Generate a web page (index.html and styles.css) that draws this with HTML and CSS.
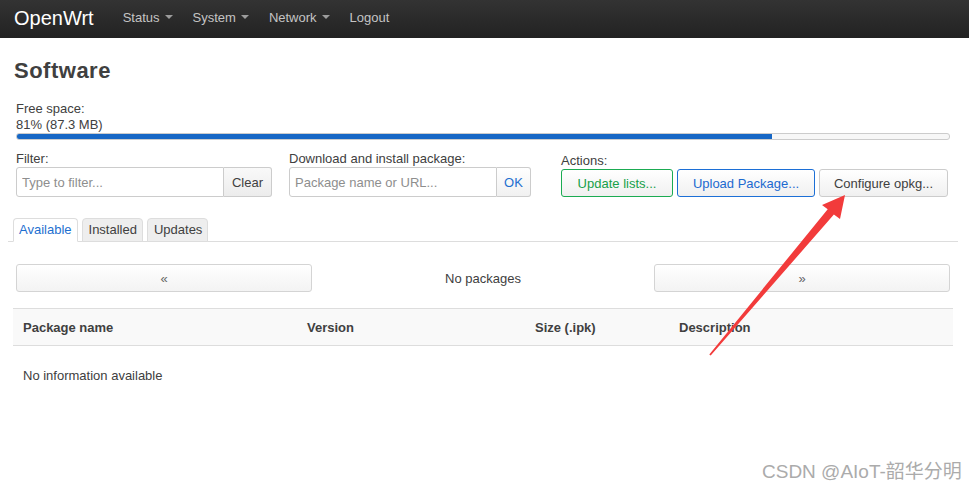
FILE: index.html
```html
<!DOCTYPE html>
<html lang="en">
<head>
<meta charset="utf-8">
<title>Software - OpenWrt</title>
<link rel="stylesheet" href="styles.css">
</head>
<body>
<header class="navbar">
  <a class="brand">OpenWrt</a>
  <ul class="nav">
    <li><a>Status<span class="caret"></span></a></li>
    <li><a>System<span class="caret"></span></a></li>
    <li><a>Network<span class="caret"></span></a></li>
    <li><a>Logout</a></li>
  </ul>
</header>
<main class="main">
  <h2 class="title">Software</h2>
  <div class="section">
    <div class="label free-first">Free space:</div>
    <div class="label">81% (87.3 MB)</div>
    <div class="progress"><div class="progress-bar" style="width:81%"></div></div>
    <div class="controls">
      <div class="ctrl">
        <label class="label">Filter:</label>
        <div class="group">
          <input class="input" type="text" placeholder="Type to filter...">
          <button class="addon">Clear</button>
        </div>
      </div>
      <div class="ctrl">
        <label class="label">Download and install package:</label>
        <div class="group">
          <input class="input" type="text" placeholder="Package name or URL...">
          <button class="addon addon-ok">OK</button>
        </div>
      </div>
      <div class="ctrl ctrl-actions">
        <label class="label">Actions:</label>
        <div class="actions">
          <button class="btn btn-green">Update lists...</button>
          <button class="btn btn-blue">Upload Package...</button>
          <button class="btn btn-plain">Configure opkg...</button>
        </div>
      </div>
    </div>
  </div>
  <ul class="tabs">
    <li><a class="tab active">Available</a></li>
    <li><a class="tab">Installed</a></li>
    <li><a class="tab">Updates</a></li>
  </ul>
  <div class="pager">
    <button class="pbtn">&laquo;</button>
    <div class="pinfo">No packages</div>
    <button class="pbtn">&raquo;</button>
  </div>
  <div class="table">
    <div class="thead">
      <div class="th">Package name</div>
      <div class="th">Version</div>
      <div class="th">Size (.ipk)</div>
      <div class="th">Description</div>
    </div>
    <div class="placeholder">No information available</div>
  </div>
</main>
<div class="watermark">CSDN @AIoT-韶华分明</div>
<svg class="arrow" width="969" height="490" viewBox="0 0 969 490" xmlns="http://www.w3.org/2000/svg">
  <polygon points="845,195 840,219 833.9,214.5 710.7,355.5 709.3,354.5 827.7,209.3 822,205" fill="#f23b3b"/>
</svg>
</body>
</html>
```

FILE: styles.css
```css
* { box-sizing: border-box; }
html, body { margin: 0; padding: 0; }
body {
  font-family: "Liberation Sans", Arial, sans-serif;
  font-size: 13px;
  color: #404040;
  background: #fff;
  width: 969px;
  height: 490px;
  overflow: hidden;
  position: relative;
}

/* navbar */
.navbar {
  height: 38px;
  background: linear-gradient(#333333, #222222);
  display: flex;
  align-items: flex-start;
  padding-left: 14px;
}
.brand {
  font-size: 20px;
  line-height: 36px;
  color: #ffffff;
  margin-right: 19px;
}
.nav { display: flex; list-style: none; margin: 0; padding: 0; }
.nav a {
  display: block;
  padding: 0 10px;
  line-height: 36px;
  color: #c4c4c4;
  font-size: 13px;
}
.caret {
  display: inline-block;
  width: 0;
  height: 0;
  border-top: 4px solid #9c9c9c;
  border-left: 4px solid transparent;
  border-right: 4px solid transparent;
  margin-left: 5px;
  vertical-align: 3px;
}

/* main */
.main { padding: 0 11px 0 8px; }
.title {
  font-size: 22px;
  font-weight: bold;
  line-height: 26px;
  letter-spacing: 0.5px;
  margin: 20px 0 0 6px;
  color: #404040;
}
.section { padding: 0 8px; }
.label { display: block; line-height: 16px; font-size: 13px; }
.free-first { margin-top: 17px; }
.progress {
  height: 7px;
  border: 1px solid #cccccc;
  border-radius: 3px;
  background: #f7f7f7;
  overflow: hidden;
}
.progress-bar { height: 100%; background: #1767c5; }

.controls {
  display: grid;
  grid-template-columns: 273px 272px 1fr;
  margin-top: 11px;
}
.ctrl { display: flex; flex-direction: column; }
.ctrl-actions { justify-content: flex-end; }
.group { display: flex; height: 30px; }
.input {
  width: 208px;
  height: 30px;
  border: 1px solid #cccccc;
  border-radius: 3px 0 0 3px;
  padding: 0 5px;
  font-family: "Liberation Sans", Arial, sans-serif;
  font-size: 13px;
  color: #404040;
  outline: none;
}
.input::placeholder { color: #8e8e8e; }
.addon {
  height: 30px;
  width: 48px;
  border: 1px solid #cccccc;
  border-left: none;
  border-radius: 0 3px 3px 0;
  background: linear-gradient(#f9f9f9, #ececec);
  padding: 0;
  font-family: "Liberation Sans", Arial, sans-serif;
  font-size: 13px;
  color: #404040;
}
.addon-ok { width: 34px; color: #1e6fd0; background: linear-gradient(#ffffff, #f1f1f1); }

.actions { display: flex; gap: 4px; }
.btn {
  height: 28px;
  padding: 0;
  border: 1px solid #cccccc;
  border-radius: 3px;
  background: linear-gradient(#ffffff, #f0f0f0);
  font-family: "Liberation Sans", Arial, sans-serif;
  font-size: 13px;
  color: #404040;
  white-space: nowrap;
}
.btn-green { width: 112px; border-color: #1bab52; color: #17a049; }
.btn-blue { width: 138px; border-color: #1c6fd6; color: #1c6ad0; }
.btn-plain { width: 129px; }

/* tabs */
.tabs {
  display: flex;
  gap: 4px;
  list-style: none;
  margin: 21px 0 0;
  padding: 0 0 0 5px;
  border-bottom: 1px solid #dddddd;
}
.tabs li { margin-bottom: -1px; }
.tab {
  display: block;
  line-height: 22px;
  padding: 0 5px 0 6px;
  border: 1px solid #dddddd;
  border-radius: 4px 4px 0 0;
  background: #eeeeee;
  color: #404040;
  font-size: 13px;
}
.tab.active { padding: 0 5px; background: #ffffff; border-bottom-color: #ffffff; color: #1e6fd0; }

/* pager */
.pager {
  display: grid;
  grid-template-columns: 296px 1fr 296px;
  align-items: center;
  padding: 0 8px;
  margin-top: 22px;
}
.pbtn {
  height: 28px;
  border: 1px solid #d4d4d4;
  border-radius: 3px;
  background: linear-gradient(#ffffff, #f3f3f3);
  font-family: "Liberation Sans", Arial, sans-serif;
  font-size: 13px;
  color: #666666;
}
.pinfo { text-align: center; }

/* table */
.table { margin: 16px 5px 0; }
.thead {
  display: grid;
  grid-template-columns: 284px 228px 144px 1fr;
  background: #f9f9f9;
  border-top: 1px solid #dddddd;
  border-bottom: 1px solid #dddddd;
}
.th {
  font-weight: bold;
  line-height: 16px;
  padding: 11px 10px 9px;
}
.placeholder { line-height: 16px; padding: 22px 10px; }

/* overlays */
.watermark {
  position: absolute;
  left: 762px;
  top: 461px;
  font-family: "Liberation Sans", "Noto Sans CJK SC", sans-serif;
  font-size: 19px;
  line-height: 22px;
  color: #ababab;
  white-space: nowrap;
}
.arrow {
  position: absolute;
  left: 0;
  top: 0;
  pointer-events: none;
}
```
